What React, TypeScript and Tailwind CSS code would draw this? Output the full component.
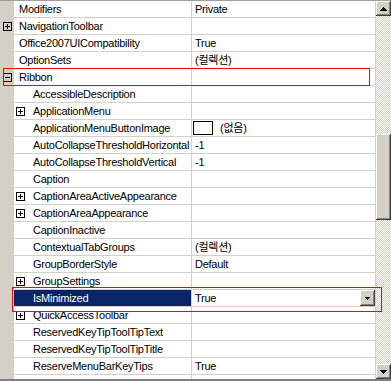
type Row = {
  name: string;
  level: 0 | 1;
  expand?: 'plus' | 'minus';
  value?: string;
  image?: boolean;
  selected?: boolean;
};

const rows: Row[] = [
  { name: 'Modifiers', level: 0, value: 'Private' },
  { name: 'NavigationToolbar', level: 0, expand: 'plus' },
  { name: 'Office2007UICompatibility', level: 0, value: 'True' },
  { name: 'OptionSets', level: 0, value: '(컬렉션)' },
  { name: 'Ribbon', level: 0, expand: 'minus' },
  { name: 'AccessibleDescription', level: 1 },
  { name: 'ApplicationMenu', level: 1, expand: 'plus' },
  { name: 'ApplicationMenuButtonImage', level: 1, value: '(없음)', image: true },
  { name: 'AutoCollapseThresholdHorizontal', level: 1, value: '-1' },
  { name: 'AutoCollapseThresholdVertical', level: 1, value: '-1' },
  { name: 'Caption', level: 1 },
  { name: 'CaptionAreaActiveAppearance', level: 1, expand: 'plus' },
  { name: 'CaptionAreaAppearance', level: 1, expand: 'plus' },
  { name: 'CaptionInactive', level: 1 },
  { name: 'ContextualTabGroups', level: 1, value: '(컬렉션)' },
  { name: 'GroupBorderStyle', level: 1, value: 'Default' },
  { name: 'GroupSettings', level: 1, expand: 'plus' },
  { name: 'IsMinimized', level: 1, value: 'True', selected: true },
  { name: 'QuickAccessToolbar', level: 1, expand: 'plus' },
  { name: 'ReservedKeyTipToolTipText', level: 1 },
  { name: 'ReservedKeyTipToolTipTitle', level: 1 },
  { name: 'ReserveMenuBarKeyTips', level: 1, value: 'True' },
];

function ExpandBox({ kind }: { kind: 'plus' | 'minus' }) {
  return (
    <svg width="9" height="9" viewBox="0 0 9 9" shapeRendering="crispEdges" className="shrink-0">
      <rect x="0.5" y="0.5" width="8" height="8" fill="none" stroke="#000" />
      <line x1="2" y1="4.5" x2="7" y2="4.5" stroke="#000" />
      {kind === 'plus' && <line x1="4.5" y1="2" x2="4.5" y2="7" stroke="#000" />}
    </svg>
  );
}

// classic raised 3d button face
const raised =
  'bg-[#d4d0c8] shadow-[inset_-1px_-1px_#404040,inset_1px_1px_#ffffff,inset_-2px_-2px_#808080,inset_2px_2px_#d4d0c8]';

function Arrow({ up }: { up?: boolean }) {
  return (
    <svg width="7" height="4" viewBox="0 0 7 4" shapeRendering="crispEdges">
      <path d={up ? 'M3.5 0 L7 4 L0 4 Z' : 'M0 0 L7 0 L3.5 4 Z'} fill="#000" />
    </svg>
  );
}

function PropRow({ row }: { row: Row }) {
  return (
    <div className="flex h-[17px] shrink-0 border-b border-[#d4d0c8]">
      <div className="flex w-[14px] items-center bg-[#d4d0c8] pl-[3px]">
        {row.level === 0 && row.expand && <ExpandBox kind={row.expand} />}
      </div>
      <div
        className={`flex w-[178px] items-center overflow-hidden whitespace-nowrap border-r border-[#d4d0c8] ${
          row.selected ? 'bg-[#0a246a] text-white' : ''
        }`}
      >
        {row.level === 0 ? (
          <span className="pl-[5px]">{row.name}</span>
        ) : (
          <>
            <div className="flex w-[19px] shrink-0 items-center pl-[2px]">
              {row.expand && <ExpandBox kind={row.expand} />}
            </div>
            <span>{row.name}</span>
          </>
        )}
      </div>
      <div className="flex flex-1 items-center overflow-hidden whitespace-nowrap border-r border-[#d4d0c8]">
        {row.image && <div className="ml-[1px] mr-[7px] h-[14px] w-[20px] shrink-0 border border-black bg-white" />}
        <span className={row.image ? '' : 'pl-[3px]'}>{row.value}</span>
        {row.selected && (
          <div className={`ml-auto flex h-[16px] w-[15px] items-center justify-center ${raised}`}>
            <svg width="5" height="3" viewBox="0 0 5 3" shapeRendering="crispEdges">
              <path d="M0 0 L5 0 L2.5 3 Z" fill="#000" />
            </svg>
          </div>
        )}
      </div>
    </div>
  );
}

export default function App() {
  return (
    <div
      className="relative flex h-[381px] w-[391px] overflow-hidden border-t border-b-2 border-t-[#a0a0a0] border-b-[#808080] bg-white text-[11px] leading-[16px] tracking-[-0.25px] text-black"
      style={{ fontFamily: '"Liberation Sans", "Noto Sans CJK KR", sans-serif' }}
    >
      <div className="flex w-[376px] flex-col">
        {rows.map((r) => (
          <PropRow key={r.name} row={r} />
        ))}
        <div className="flex flex-1">
          <div className="w-[14px] bg-[#d4d0c8]" />
          <div className="w-[178px] border-r border-[#d4d0c8]" />
          <div className="flex-1 border-r border-[#d4d0c8]" />
        </div>
      </div>

      {/* scrollbar */}
      <div className="flex w-[15px] flex-col">
        <div className={`flex h-[15px] items-center justify-center ${raised}`}>
          <Arrow up />
        </div>
        <div className="flex flex-1 flex-col bg-[repeating-conic-gradient(#d4d0c8_0_25%,#ffffff_0_50%)] bg-[length:2px_2px]">
          <div className={`mt-[118px] h-[86px] ${raised}`} />
        </div>
        <div className={`flex h-[15px] items-center justify-center ${raised}`}>
          <Arrow />
        </div>
      </div>

      {/* red highlight boxes */}
      <div className="pointer-events-none absolute left-[3px] top-[67px] h-[18px] w-[367px] border border-[#ff0000]" />
      <div className="pointer-events-none absolute left-[12px] top-[286px] h-[25px] w-[370px] border border-[#ff0000]" />
    </div>
  );
}
